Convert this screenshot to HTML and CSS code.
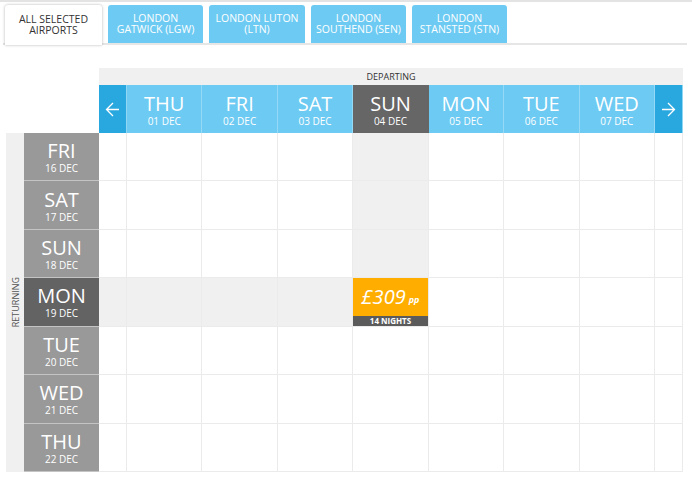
FILE: index.html
```html
<!DOCTYPE html>
<html lang="en">
<head>
    <meta charset="UTF-8">
    <meta name="viewport" content="width=device-width, initial-scale=1.0">
    <title>Flight Matrix</title>
    <link rel="stylesheet" href="styles.css">
</head>
<body>
    <div class="page">
        <ul class="tabs">
            <li class="tab active">ALL SELECTED<br>AIRPORTS</li>
            <li class="tab">LONDON<br>GATWICK (LGW)</li>
            <li class="tab wide">LONDON LUTON<br>(LTN)</li>
            <li class="tab">LONDON<br>SOUTHEND (SEN)</li>
            <li class="tab">LONDON<br>STANSTED (STN)</li>
        </ul>

        <div class="matrix">
            <div class="corner"></div>
            <div class="departing">DEPARTING</div>

            <!-- departing days -->
            <div class="nav">
                <svg width="15" height="17" viewBox="0 0 15 17"><path d="M14 8.5H1.5M8 2L1.5 8.5L8 15" fill="none" stroke="#fff" stroke-width="1.3"/></svg>
            </div>
            <div class="day"><span class="name">THU</span><span class="date">01 DEC</span></div>
            <div class="day"><span class="name">FRI</span><span class="date">02 DEC</span></div>
            <div class="day"><span class="name">SAT</span><span class="date">03 DEC</span></div>
            <div class="day current"><span class="name">SUN</span><span class="date">04 DEC</span></div>
            <div class="day"><span class="name">MON</span><span class="date">05 DEC</span></div>
            <div class="day"><span class="name">TUE</span><span class="date">06 DEC</span></div>
            <div class="day"><span class="name">WED</span><span class="date">07 DEC</span></div>
            <div class="nav">
                <svg width="15" height="17" viewBox="0 0 15 17"><path d="M1 8.5H13.5M7 2L13.5 8.5L7 15" fill="none" stroke="#fff" stroke-width="1.3"/></svg>
            </div>

            <div class="returning"><span>RETURNING</span></div>

            <!-- returning rows -->
            <div class="ret"><span class="name">FRI</span><span class="date">16 DEC</span></div>
            <div class="cell"></div><div class="cell"></div><div class="cell"></div><div class="cell"></div>
            <div class="cell shade"></div><div class="cell"></div><div class="cell"></div><div class="cell"></div><div class="cell"></div>

            <div class="ret"><span class="name">SAT</span><span class="date">17 DEC</span></div>
            <div class="cell"></div><div class="cell"></div><div class="cell"></div><div class="cell"></div>
            <div class="cell shade"></div><div class="cell"></div><div class="cell"></div><div class="cell"></div><div class="cell"></div>

            <div class="ret"><span class="name">SUN</span><span class="date">18 DEC</span></div>
            <div class="cell"></div><div class="cell"></div><div class="cell"></div><div class="cell"></div>
            <div class="cell shade"></div><div class="cell"></div><div class="cell"></div><div class="cell"></div><div class="cell"></div>

            <div class="ret current"><span class="name">MON</span><span class="date">19 DEC</span></div>
            <div class="cell shade"></div><div class="cell shade"></div><div class="cell shade"></div><div class="cell shade"></div>
            <div class="cell price">
                <div class="amount">£309<small>pp</small></div>
                <div class="nights">14 NIGHTS</div>
            </div>
            <div class="cell"></div><div class="cell"></div><div class="cell"></div><div class="cell"></div>

            <div class="ret"><span class="name">TUE</span><span class="date">20 DEC</span></div>
            <div class="cell"></div><div class="cell"></div><div class="cell"></div><div class="cell"></div>
            <div class="cell"></div><div class="cell"></div><div class="cell"></div><div class="cell"></div><div class="cell"></div>

            <div class="ret"><span class="name">WED</span><span class="date">21 DEC</span></div>
            <div class="cell"></div><div class="cell"></div><div class="cell"></div><div class="cell"></div>
            <div class="cell"></div><div class="cell"></div><div class="cell"></div><div class="cell"></div><div class="cell"></div>

            <div class="ret"><span class="name">THU</span><span class="date">22 DEC</span></div>
            <div class="cell"></div><div class="cell"></div><div class="cell"></div><div class="cell"></div>
            <div class="cell"></div><div class="cell"></div><div class="cell"></div><div class="cell"></div><div class="cell"></div>
        </div>
    </div>
</body>
</html>
```

FILE: styles.css
```css
body {
    margin: 0;
    padding: 0;
    background-color: #fff;
    font-family: "Open Sans", Arial, sans-serif;
}
.page {
    border-top: 2px solid #e3e3e3;
    padding-top: 3px;
}
.tabs {
    list-style: none;
    display: flex;
    gap: 6px;
    margin: 0 5px 0 3px;
    padding: 0 0 0 2px;
    height: 38px;
    border-bottom: 2px solid #e6e6e6;
}
.tab {
    width: 95px;
    height: 38px;
    display: flex;
    align-items: center;
    justify-content: center;
    text-align: center;
    font-size: 10.5px;
    line-height: 11.5px;
    color: #fff;
    background-color: #6dcaf2;
    border-radius: 3px 3px 0 0;
}
.tab.wide {
    width: 96px;
}
.tab.active {
    width: 97px;
    height: 40px;
    color: #333;
    background-color: #fff;
    box-shadow: 0 0 3px rgba(0,0,0,0.3);
    position: relative;
}
.matrix {
    display: grid;
    grid-template-columns: 18px 75px 28px repeat(7, 1fr) 28px;
    grid-template-rows: 17px 48px repeat(7, 1fr);
    width: 677px;
    height: 404px;
    margin: 23px 0 0 6px;
}
.corner {
    grid-column: 1 / 3;
    grid-row: 1 / 3;
}
.departing {
    grid-column: 3 / 12;
    grid-row: 1;
    background-color: #f0f0f0;
    font-size: 9px;
    line-height: 17px;
    text-align: center;
    color: #333;
}
.nav {
    background-color: #29a7df;
    border-right: 1px solid #8fd5f4;
    display: flex;
    align-items: center;
    justify-content: center;
}
.nav:last-of-type {
    border-right: none;
}
.day, .ret {
    display: flex;
    flex-direction: column;
    align-items: center;
    justify-content: center;
    padding-top: 1px;
    box-sizing: border-box;
    color: #fff;
}
.day {
    background-color: #6dcaf2;
    border-right: 1px solid #96d9f6;
}
.day.current {
    background-color: #666;
    border-right-color: #666;
}
.name {
    font-size: 20px;
    line-height: 22px;
}
.date {
    font-size: 10px;
    line-height: 12px;
}
.returning {
    grid-column: 1;
    grid-row: 3 / 10;
    background-color: #f0f0f0;
    display: flex;
    align-items: center;
    justify-content: center;
}
.returning span {
    writing-mode: vertical-rl;
    transform: rotate(180deg);
    font-size: 9px;
    color: #555;
}
.ret {
    background-color: #999;
    border-bottom: 1px solid #c4c4c4;
}
.ret:last-of-type {
    border-bottom: none;
}
.ret.current {
    background-color: #636363;
}
.cell {
    border-right: 1px solid #ebebeb;
    border-bottom: 1px solid #ebebeb;
    background-color: #fff;
}
.cell.shade {
    background-color: #f0f0f0;
}
.cell.price {
    background-color: #ffae00;
    display: flex;
    flex-direction: column;
}
.amount {
    flex: 1;
    display: flex;
    align-items: center;
    justify-content: center;
    font-size: 20px;
    font-style: italic;
    color: #fff;
}
.amount small {
    font-size: 9px;
    font-weight: bold;
    margin: 6px 0 0 3px;
}
.nights {
    background-color: #5b5b5b;
    color: #fff;
    font-size: 8px;
    font-weight: bold;
    line-height: 10px;
    text-align: center;
}
```
